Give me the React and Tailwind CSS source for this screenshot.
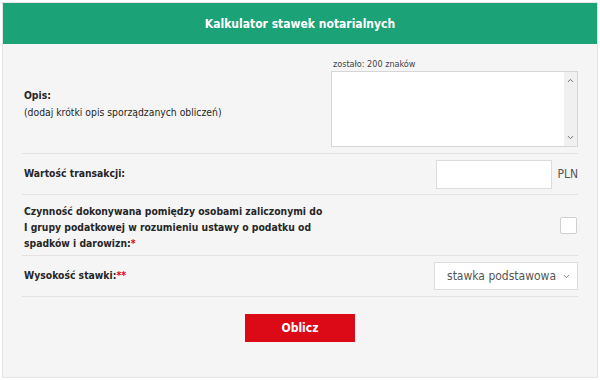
import { ChevronDown, ChevronUp } from 'lucide-react';

const font = { fontFamily: '"DejaVu Sans Condensed", "Liberation Sans", Arial, sans-serif' };

const App = () => {
    return (
        <div className="w-[600px] h-[380px] bg-white p-[2px]" style={font}>
            <div className="h-[376px] border border-[#e4e4e4] bg-[#f5f5f5] flex flex-col">
                {/* Header */}
                <div className="h-[41px] bg-[#1ba277] flex items-center justify-center">
                    <h1 className="text-white font-bold text-[12px]">Kalkulator stawek notarialnych</h1>
                </div>

                <div className="px-[19px]">
                    {/* Opis */}
                    <div className="flex items-center justify-between border-b border-[#e2e2e2] pt-[14px] pb-[6px]">
                        <div className="pl-[2px] pt-[2px] text-[10.3px] text-[#262626] leading-[17px]">
                            <p className="font-bold">Opis:</p>
                            <p>(dodaj krótki opis sporządzanych obliczeń)</p>
                        </div>
                        <div className="w-[247px]">
                            <p className="text-[9px] text-[#444] leading-[12px] pl-[2px] mb-[1px]">zostało: 200 znaków</p>
                            <div className="relative h-[76px] bg-white border border-[#d6d6d6]">
                                <textarea className="w-full h-full resize-none outline-none overflow-hidden pr-[16px]" />
                                <div className="absolute right-0 top-0 bottom-0 w-[13px] bg-[#f0f0f0] flex flex-col items-center justify-between py-[4px] text-[#666]">
                                    <ChevronUp className="w-[9px] h-[9px]" strokeWidth={2.5} />
                                    <ChevronDown className="w-[9px] h-[9px]" strokeWidth={2.5} />
                                </div>
                            </div>
                        </div>
                    </div>

                    {/* Wartość transakcji */}
                    <div className="flex items-center justify-between border-b border-[#e2e2e2] h-[41px]">
                        <label className="pl-[2px] text-[10.3px] font-bold text-[#262626]">Wartość transakcji:</label>
                        <div className="flex items-center">
                            <input type="text" className="w-[116px] h-[29px] bg-white border border-[#dcdcdc] outline-none" />
                            <span className="ml-[5px] text-[12px] text-[#555]">PLN</span>
                        </div>
                    </div>

                    {/* Czynność */}
                    <div className="flex items-center justify-between border-b border-[#e2e2e2] h-[61px]">
                        <label className="pl-[2px] pt-[3px] w-[302px] text-[10.3px] font-bold text-[#262626] leading-[16px]">
                            Czynność dokonywana pomiędzy osobami zaliczonymi do I grupy podatkowej w rozumieniu ustawy o podatku od spadków i darowizn:<span className="text-[#e3001b]">*</span>
                        </label>
                        <input type="checkbox" className="appearance-none w-[17px] h-[17px] bg-white border border-[#cfcfcf] rounded-[2px] mr-[1px]" />
                    </div>

                    {/* Wysokość stawki */}
                    <div className="flex items-center justify-between border-b border-[#e2e2e2] h-[41px]">
                        <label className="pl-[2px] text-[10.3px] font-bold text-[#262626]">
                            Wysokość stawki:<span className="text-[#e3001b]">**</span>
                        </label>
                        <div className="relative">
                            <select className="appearance-none w-[144px] h-[28px] bg-white border border-[#dcdcdc] pl-[12px] pr-[20px] text-[12px] text-[#555] outline-none">
                                <option>stawka podstawowa</option>
                                <option>stawka maksymalna</option>
                            </select>
                            <ChevronDown className="absolute right-[7px] top-[10px] w-[9px] h-[9px] text-[#555] pointer-events-none" strokeWidth={2} />
                        </div>
                    </div>
                </div>

                {/* Button */}
                <div className="flex justify-center pt-[17px]">
                    <button className="w-[110px] h-[28px] bg-[#db0a16] text-white font-bold text-[12px]">Oblicz</button>
                </div>
            </div>
        </div>
    );
};

export default App;
